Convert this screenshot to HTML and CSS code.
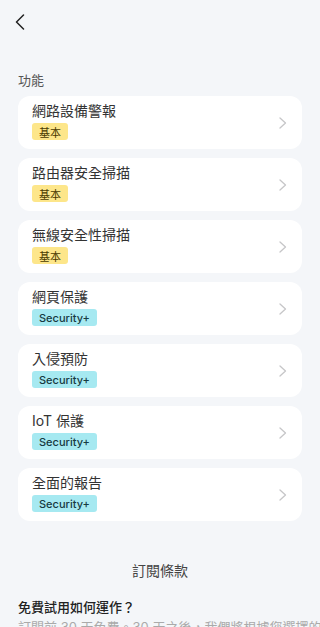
FILE: index.html
```html
<!DOCTYPE html>
<html lang="zh-Hant">
<head>
<meta charset="utf-8">
<link rel="stylesheet" href="styles.css">
</head>
<body>
<div class="page">
  <header class="header">
    <svg class="back" width="10" height="16" viewBox="0 0 10 16"><path d="M8.5 1 L1.5 8 L8.5 15" fill="none" stroke="#222" stroke-width="1.5" stroke-linecap="round" stroke-linejoin="round"/></svg>
  </header>
  <div class="section-label">功能</div>
  <div class="list">
    <div class="card"><div class="info"><div class="title">網路設備警報</div><span class="badge basic">基本</span></div><svg class="chev" width="8" height="12" viewBox="0 0 8 12"><path d="M1 1 L6.5 6 L1 11" fill="none" stroke="#c6c6c8" stroke-width="1.3" stroke-linecap="round" stroke-linejoin="round"/></svg></div>
    <div class="card"><div class="info"><div class="title">路由器安全掃描</div><span class="badge basic">基本</span></div><svg class="chev" width="8" height="12" viewBox="0 0 8 12"><path d="M1 1 L6.5 6 L1 11" fill="none" stroke="#c6c6c8" stroke-width="1.3" stroke-linecap="round" stroke-linejoin="round"/></svg></div>
    <div class="card"><div class="info"><div class="title">無線安全性掃描</div><span class="badge basic">基本</span></div><svg class="chev" width="8" height="12" viewBox="0 0 8 12"><path d="M1 1 L6.5 6 L1 11" fill="none" stroke="#c6c6c8" stroke-width="1.3" stroke-linecap="round" stroke-linejoin="round"/></svg></div>
    <div class="card"><div class="info"><div class="title">網頁保護</div><span class="badge plus">Security+</span></div><svg class="chev" width="8" height="12" viewBox="0 0 8 12"><path d="M1 1 L6.5 6 L1 11" fill="none" stroke="#c6c6c8" stroke-width="1.3" stroke-linecap="round" stroke-linejoin="round"/></svg></div>
    <div class="card"><div class="info"><div class="title">入侵預防</div><span class="badge plus">Security+</span></div><svg class="chev" width="8" height="12" viewBox="0 0 8 12"><path d="M1 1 L6.5 6 L1 11" fill="none" stroke="#c6c6c8" stroke-width="1.3" stroke-linecap="round" stroke-linejoin="round"/></svg></div>
    <div class="card"><div class="info"><div class="title">IoT 保護</div><span class="badge plus">Security+</span></div><svg class="chev" width="8" height="12" viewBox="0 0 8 12"><path d="M1 1 L6.5 6 L1 11" fill="none" stroke="#c6c6c8" stroke-width="1.3" stroke-linecap="round" stroke-linejoin="round"/></svg></div>
    <div class="card"><div class="info"><div class="title">全面的報告</div><span class="badge plus">Security+</span></div><svg class="chev" width="8" height="12" viewBox="0 0 8 12"><path d="M1 1 L6.5 6 L1 11" fill="none" stroke="#c6c6c8" stroke-width="1.3" stroke-linecap="round" stroke-linejoin="round"/></svg></div>
  </div>
  <h2 class="terms">訂閱條款</h2>
  <h3 class="question">免費試用如何運作？</h3>
  <p class="answer">訂閱前 30 天免費。30 天之後，我們將根據您選擇的方案向您收費。</p>
</div>
</body>
</html>
```
FILE: styles.css
```css
html, body {
  margin: 0;
  padding: 0;
  background: #f4f6f9;
}
body {
  font-family: Inter, "Noto Sans CJK TC", sans-serif;
  color: #333;
}
.page {
  width: 320px;
  height: 627px;
  overflow: hidden;
}
.header {
  height: 44px;
  display: flex;
  align-items: flex-start;
  padding: 14px 0 0 15px;
  box-sizing: border-box;
}
.back {
  display: block;
}
.section-label {
  margin: 27px 18px 0;
  font-size: 13px;
  line-height: 18px;
  color: #555;
}
.list {
  margin: 7px 18px 0;
  display: flex;
  flex-direction: column;
  gap: 9px;
}
.card {
  background: #fff;
  border-radius: 12px;
  height: 53px;
  box-sizing: border-box;
  padding: 6px 15px 9px 14px;
  display: flex;
  align-items: center;
  justify-content: space-between;
}
.info {
  display: flex;
  flex-direction: column;
  align-items: flex-start;
  align-self: flex-start;
}
.title {
  font-size: 14px;
  line-height: 18px;
  color: #333;
  margin-bottom: 3px;
}
.badge {
  display: inline-flex;
  align-items: center;
  height: 17px;
  border-radius: 3px;
  font-size: 11px;
}
.badge.basic {
  background: #fde68a;
  color: #4a3b00;
  font-weight: 400;
  padding: 0 7px;
}
.badge.plus {
  background: #a6e9f1;
  color: #173a42;
  font-weight: 500;
  padding: 0 7px;
}
.chev {
  display: block;
  margin-top: 3px;
}
.terms {
  margin: 40px 0 0;
  text-align: center;
  font-size: 14px;
  line-height: 20px;
  font-weight: 400;
  color: #444;
}
.question {
  margin: 16px 18px 0;
  font-size: 13px;
  line-height: 20px;
  font-weight: 500;
  color: #222;
}
.answer {
  margin: 0 18px;
  font-size: 13px;
  line-height: 20px;
  color: #aaa;
  white-space: nowrap;
}
```
